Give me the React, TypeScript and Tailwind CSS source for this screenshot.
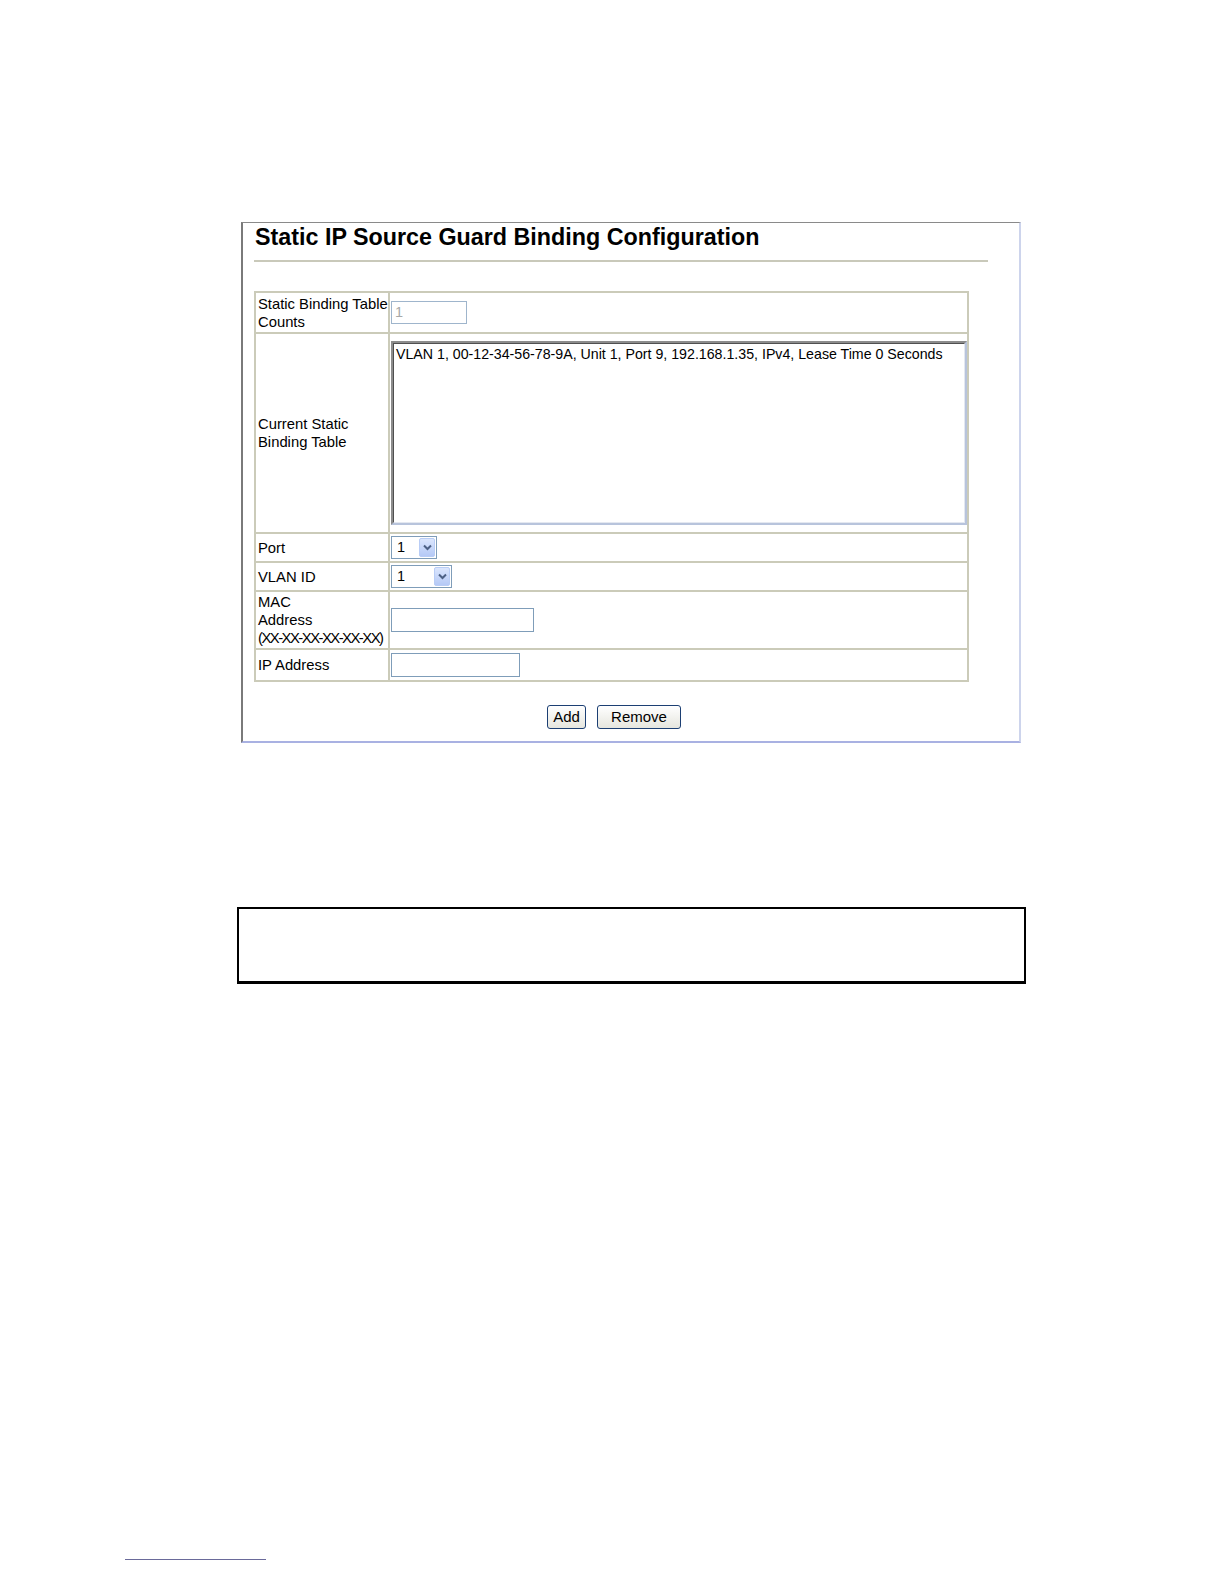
import React from "react";

const rows = [
  { label: ["Static Binding Table", "Counts"], h: "h-[41px]", kind: "count" },
  { label: ["Current Static", "Binding Table"], h: "h-[200px]", kind: "list" },
  { label: ["Port"], h: "h-[29px]", kind: "port" },
  { label: ["VLAN ID"], h: "h-[29px]", kind: "vlan" },
  { label: ["MAC", "Address", "(XX-XX-XX-XX-XX-XX)"], h: "h-[58px]", kind: "mac" },
  { label: ["IP Address"], h: "h-[32px]", kind: "ip" },
];

function Select({ width }: { width: string }) {
  return (
    <div className={`flex h-[23px] ${width} items-stretch border border-[#7f9db9] bg-white`}>
      <span className="flex-1 pl-[5px] text-[14.5px] leading-[21px]">1</span>
      <span className="m-[1px] flex w-[16px] items-center justify-center rounded-[2px] border border-[#b9cdf6] bg-gradient-to-b from-[#dbe6fd] to-[#b5c9f6]">
        <svg width="9" height="7" viewBox="0 0 9 7">
          <path d="M1 1.5 L4.5 5 L8 1.5" fill="none" stroke="#4d6185" strokeWidth="2" />
        </svg>
      </span>
    </div>
  );
}

function Field({ kind }: { kind: string }) {
  if (kind === "count")
    return (
      <div className="h-[23px] w-[76px] border border-[#9fb5cc] pl-[3px] text-[14.5px] leading-[21px] text-[#a8a8a8]">
        1
      </div>
    );
  if (kind === "list")
    return (
      <div className="h-[184px] w-[576px] border-2 border-t-[#8c8c8c] border-l-[#8c8c8c] border-r-[#b8c4dc] border-b-[#b8c4dc] bg-white">
        <div className="h-full border border-t-[#505050] border-l-[#505050] border-r-[#e4e8f0] border-b-[#e4e8f0] pl-[2px] pt-[1px] text-[14.2px] leading-[18px] whitespace-nowrap">
          VLAN 1, 00-12-34-56-78-9A, Unit 1, Port 9, 192.168.1.35, IPv4, Lease Time 0 Seconds
        </div>
      </div>
    );
  if (kind === "port") return <Select width="w-[46px]" />;
  if (kind === "vlan") return <Select width="w-[61px]" />;
  if (kind === "mac") return <div className="h-[24px] w-[143px] border border-[#7f9db9] bg-white" />;
  return <div className="h-[24px] w-[129px] border border-[#7f9db9] bg-white" />;
}

export default function App() {
  return (
    <div className="relative h-[1570px] overflow-hidden bg-white font-['Liberation_Sans',Arial,sans-serif] text-black">
      <div className="pl-[241px] pt-[222px]">
        <div className="h-[521px] w-[780px] border-t border-l-2 border-r-2 border-b-2 border-t-[#8a8a8a] border-l-[#7a7a7a] border-r-[#cdd4ec] border-b-[#a9b1e2] pl-[11px] pt-[1px]">
          <h1 className="pl-[1px] text-[23.3px] font-bold leading-[27px]">
            Static IP Source Guard Binding Configuration
          </h1>
          <div className="mt-[9px] h-[2px] w-[734px] bg-[#c9c9ba]" />

          <table className="mt-[29px] w-[715px] table-fixed border-collapse">
            <colgroup>
              <col className="w-[134px]" />
              <col />
            </colgroup>
            <tbody>
              {rows.map((r) => (
                <tr key={r.kind} className={r.h}>
                  <td className="overflow-visible border-2 border-[#cbcbb9] px-[2px] align-middle text-[14.8px] leading-[18px]">
                    {r.label.map((l, i) => (
                      <div
                        key={i}
                        className={
                          l.startsWith("(")
                            ? "whitespace-nowrap tracking-[-1.5px]"
                            : "whitespace-nowrap"
                        }
                      >
                        {l}
                      </div>
                    ))}
                  </td>
                  <td className="border-2 border-[#cbcbb9] pl-[1px] align-middle">
                    <Field kind={r.kind} />
                  </td>
                </tr>
              ))}
            </tbody>
          </table>

          <div className="mt-[23px] flex w-[715px] justify-center gap-[11px] pl-[5px]">
            <button className="h-[24px] w-[39px] rounded-[3px] border border-[#1c3f73] bg-gradient-to-b from-white to-[#e6e6de] text-[15px] leading-[20px]">
              Add
            </button>
            <button className="h-[24px] w-[84px] rounded-[3px] border border-[#1c3f73] bg-gradient-to-b from-white to-[#e6e6de] text-[15px] leading-[20px]">
              Remove
            </button>
          </div>
        </div>
      </div>

      <div className="ml-[237px] mt-[164px] h-[77px] w-[789px] border-2 border-b-[3px] border-black" />

      <div className="absolute left-[125px] top-[1559px] h-[1px] w-[141px] bg-[#6a6a9a]" />
    </div>
  );
}
